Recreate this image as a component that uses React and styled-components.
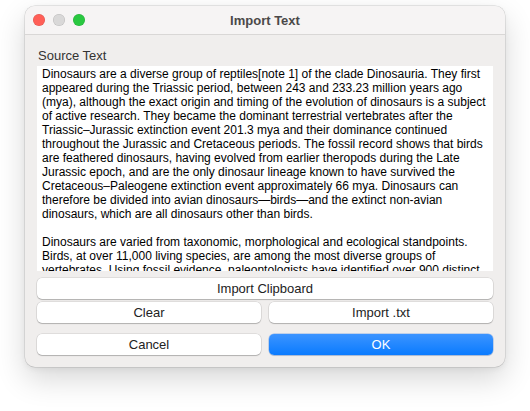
import React from 'react'
import styled, { createGlobalStyle } from 'styled-components'

const GlobalStyle = createGlobalStyle`
  html, body {
    margin: 0;
    padding: 0;
    background: #ffffff;
  }
  body {
    font-family: "Liberation Sans", Arial, Helvetica, sans-serif;
    -webkit-font-smoothing: antialiased;
  }
`

const Page = styled.div`
  padding: 6px 25px 0 25px;
  width: 530px;
  height: 411px;
  box-sizing: border-box;
`

const Window = styled.div`
  width: 480px;
  height: 361px;
  border-radius: 10px;
  background: #f0eeed;
  box-shadow: 0 0 0 0.5px rgba(0, 0, 0, 0.16), 0 12px 30px rgba(0, 0, 0, 0.16),
    0 2px 6px rgba(0, 0, 0, 0.06);
  display: flex;
  flex-direction: column;
  overflow: hidden;
`

const TitleBar = styled.div`
  height: 28px;
  flex: 0 0 auto;
  background: #f6f4f4;
  border-bottom: 1px solid #d9d7d6;
  display: flex;
  align-items: center;
  position: relative;
  padding-left: 8px;
`

const Lights = styled.div`
  display: flex;
  gap: 8px;
`

const Light = styled.span`
  width: 12px;
  height: 12px;
  border-radius: 50%;
  background: ${p => p.color};
  box-shadow: inset 0 0 0 0.5px rgba(0, 0, 0, 0.14);
`

const Title = styled.div`
  position: absolute;
  left: 0;
  right: 0;
  text-align: center;
  font-size: 13px;
  font-weight: bold;
  color: #4b4949;
  pointer-events: none;
`

const Body = styled.div`
  flex: 1;
  padding: 13px 12px 11px 12px;
  display: flex;
  flex-direction: column;
`

const Label = styled.div`
  font-size: 13px;
  color: #333;
  line-height: 16px;
  padding-left: 1px;
  margin-bottom: 2px;
`

const TextBox = styled.div`
  height: 205px;
  background: #fff;
  box-sizing: border-box;
  padding: 1px 5px;
  font-size: 12px;
  line-height: 14px;
  color: #000;
  white-space: pre;
  overflow: hidden;
`

const Row = styled.div`
  display: grid;
  grid-template-columns: ${p => (p.single ? '1fr' : '1fr 1fr')};
  gap: 8px;
  margin-top: ${p => p.top}px;
`

const Button = styled.button`
  height: 21px;
  border: none;
  border-radius: 5px;
  font-family: inherit;
  font-size: 13px;
  padding: 0;
  color: ${p => (p.primary ? '#fff' : '#222')};
  background: ${p => (p.primary ? 'linear-gradient(#3c94ff, #0a7bff)' : '#fff')};
  box-shadow: ${p =>
    p.primary
      ? '0 0 0 0.5px rgba(0,90,220,0.4), 0 1px 1px rgba(0,0,0,0.12)'
      : '0 0 0 0.5px rgba(0,0,0,0.14), 0 1px 1px rgba(0,0,0,0.2)'};
  font-weight: ${p => (p.primary ? 500 : 400)};
`

const lines = [
  'Dinosaurs are a diverse group of reptiles[note 1] of the clade Dinosauria. They first',
  'appeared during the Triassic period, between 243 and 233.23 million years ago',
  '(mya), although the exact origin and timing of the evolution of dinosaurs is a subject',
  'of active research. They became the dominant terrestrial vertebrates after the',
  'Triassic–Jurassic extinction event 201.3 mya and their dominance continued',
  'throughout the Jurassic and Cretaceous periods. The fossil record shows that birds',
  'are feathered dinosaurs, having evolved from earlier theropods during the Late',
  'Jurassic epoch, and are the only dinosaur lineage known to have survived the',
  'Cretaceous–Paleogene extinction event approximately 66 mya. Dinosaurs can',
  'therefore be divided into avian dinosaurs—birds—and the extinct non-avian',
  'dinosaurs, which are all dinosaurs other than birds.',
  '',
  'Dinosaurs are varied from taxonomic, morphological and ecological standpoints.',
  'Birds, at over 11,000 living species, are among the most diverse groups of',
  'vertebrates. Using fossil evidence, paleontologists have identified over 900 distinct',
  'genera and more than 1,000 different species of non-avian dinosaurs.',
]

export default function App() {
  return (
    <Page>
      <GlobalStyle />
      <Window>
        <TitleBar>
          <Lights>
            <Light color="#ff5f57" />
            <Light color="#d9d8d8" />
            <Light color="#29c840" />
          </Lights>
          <Title>Import Text</Title>
        </TitleBar>
        <Body>
          <Label>Source Text</Label>
          <TextBox>{lines.join('\n')}</TextBox>
          <Row single top={7}>
            <Button>Import Clipboard</Button>
          </Row>
          <Row top={3}>
            <Button>Clear</Button>
            <Button>Import .txt</Button>
          </Row>
          <Row top={11}>
            <Button>Cancel</Button>
            <Button primary>OK</Button>
          </Row>
        </Body>
      </Window>
    </Page>
  )
}
